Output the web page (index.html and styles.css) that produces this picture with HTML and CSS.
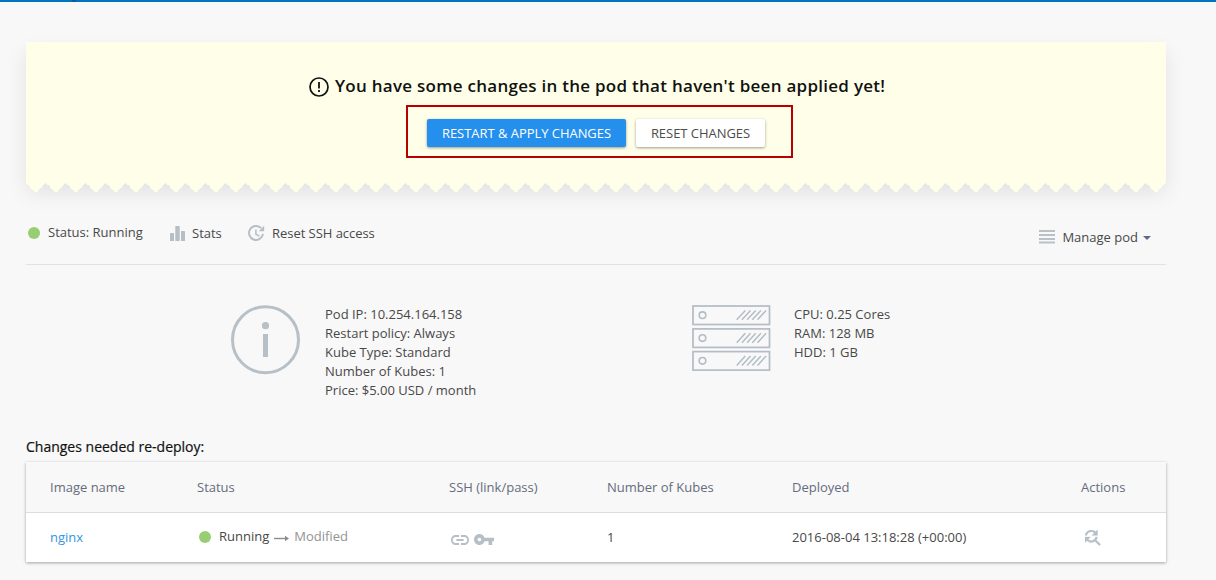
FILE: index.html
```
<!DOCTYPE html>
<html lang="en">
<head>
<meta charset="utf-8">
<title>Pod</title>
<link rel="stylesheet" href="styles.css">
</head>
<body>
<div class="topbar"><span class="topbar-notch"></span></div>
<main class="page">
  <section class="notice">
    <h1 class="notice-title">
      <svg width="20" height="20" viewBox="0 0 20 20"><circle cx="10" cy="10" r="9" fill="none" stroke="#111" stroke-width="1.7"/><path d="M10 5v6.4M10 13v2" stroke="#111" stroke-width="1.8"/></svg>
      <span class="notice-text">You have some changes in the pod that haven't been applied yet!</span>
    </h1>
    <div class="notice-actions">
      <button class="btn btn-primary">RESTART &amp; APPLY CHANGES</button>
      <button class="btn btn-plain">RESET CHANGES</button>
    </div>
  </section>

  <nav class="toolbar">
    <span class="status"><i class="dot"></i><span>Status: Running</span></span>
    <span class="tool stats">
      <svg width="15" height="15" viewBox="0 0 15 15" fill="#b6bec6"><rect x="0" y="7" width="4" height="8" rx=".6"/><rect x="5.3" y="0" width="4.4" height="15" rx=".6"/><rect x="11" y="5" width="4" height="10" rx=".6"/></svg>
      <span>Stats</span>
    </span>
    <span class="tool ssh">
      <svg width="17" height="17" viewBox="0 0 17 17" fill="none" stroke="#b6bec6"><path d="M13.200 3.200A7 7 0 1 0 15 8.800" stroke-width="1.900"/><path d="M16.200.8v5.400h-5.400z" fill="#b6bec6" stroke="none"/><path d="M7.900 4.400v4.800l3.600 2" stroke-width="1.500"/></svg>
      <span>Reset SSH access</span>
    </span>
    <span class="manage">
      <svg width="16" height="14" viewBox="0 0 16 14" fill="#b9c0c8"><path d="M0 0h16v2H0zM0 4h16v2H0zM0 8h16v2H0zM0 11.500h16v2H0z"/></svg>
      <span>Manage pod</span>
      <i class="caret"></i>
    </span>
  </nav>

  <section class="info">
    <svg class="info-icon" width="70" height="70" viewBox="0 0 70 70"><circle cx="35.500" cy="34.700" r="33" fill="none" stroke="#b7c0c7" stroke-width="3"/><circle cx="35.500" cy="20.700" r="3.600" fill="#b7c0c7"/><path d="M33 29h5v23h-5z" fill="#b7c0c7"/></svg>
    <ul class="facts pod-facts">
      <li>Pod IP: 10.254.164.158</li>
      <li>Restart policy: Always</li>
      <li>Kube Type: Standard</li>
      <li>Number of Kubes: 1</li>
      <li>Price: $5.00 USD / month</li>
    </ul>
    <svg class="server-icon" width="80" height="67" viewBox="0 0 80 67" fill="none" stroke="#b3bdc5">
      <defs><g id="unit"><rect x="1" y="1" width="76.500" height="18.500" stroke-width="1.700"/><circle cx="10.500" cy="10.200" r="3.300" stroke-width="1.600"/><path d="M44.700 14.800l8.600-9.400M49.900 14.800l8.600-9.400M55.100 14.800l8.600-9.400M60.300 14.800l8.600-9.400M65.500 14.800l8.600-9.400" stroke-width="1.500"/></g></defs>
      <use href="#unit"/><use href="#unit" y="22.900"/><use href="#unit" y="45.600"/>
    </svg>
    <ul class="facts">
      <li>CPU: 0.25 Cores</li>
      <li>RAM: 128 MB</li>
      <li>HDD: 1 GB</li>
    </ul>
  </section>

  <h2 class="table-title">Changes needed re-deploy:</h2>
  <div class="table">
    <div class="row head">
      <span>Image name</span><span>Status</span><span>SSH (link/pass)</span><span>Number of Kubes</span><span>Deployed</span><span>Actions</span>
    </div>
    <div class="row">
      <a class="link">nginx</a>
      <span class="state"><i class="dot"></i><span>Running</span>
        <svg width="15" height="7" viewBox="0 0 15 7"><path d="M0 3.500h12" stroke="#8c8c8c" stroke-width="1.400"/><path d="M11 .8l4 2.700-4 2.700z" fill="#8c8c8c"/></svg>
        <span class="muted">Modified</span></span>
      <span class="keys">
        <svg width="18" height="10" viewBox="2 7 20 10" preserveAspectRatio="none" fill="#b6bec6"><path d="M3.900 12c0-1.710 1.390-3.100 3.100-3.100h4V7H7c-2.760 0-5 2.240-5 5s2.240 5 5 5h4v-1.900H7c-1.710 0-3.100-1.390-3.100-3.100zM8 13h8v-2H8v2zm9-6h-4v1.900h4c1.710 0 3.100 1.390 3.100 3.100s-1.390 3.100-3.100 3.100h-4V17h4c2.760 0 5-2.240 5-5s-2.240-5-5-5z"/></svg>
        <svg width="20" height="11" viewBox="1 6 22 12" preserveAspectRatio="none" fill="#b6bec6"><path d="M12.650 10C11.830 7.670 9.610 6 7 6c-3.310 0-6 2.690-6 6s2.690 6 6 6c2.610 0 4.830-1.670 5.650-4H17v4h4v-4h2v-4H12.650zM7 14c-1.100 0-2-.9-2-2s.9-2 2-2 2 .9 2 2-.9 2-2 2z"/></svg>
      </span>
      <span>1</span>
      <span>2016-08-04 13:18:28 (+00:00)</span>
      <span class="action"><svg width="16" height="16" viewBox="4 4 18 18" fill="#b6bec6" stroke="#b6bec6" stroke-width=".5"><path d="M11 6c1.380 0 2.630.56 3.540 1.460L12 10h6V4l-2.050 2.050C14.680 4.780 12.930 4 11 4c-3.530 0-6.430 2.610-6.920 6H6.100c.46-2.280 2.480-4 4.900-4zm5.640 9.140c.66-.9 1.120-1.970 1.280-3.140H15.900c-.46 2.280-2.480 4-4.900 4-1.380 0-2.630-.56-3.540-1.460L10 12H4v6l2.050-2.050C7.320 17.220 9.070 18 11 18c1.550 0 2.980-.51 4.140-1.360L20 21.490 21.490 20l-4.850-4.860z"/></svg></span>
    </div>
  </div>
</main>
</body>
</html>
```
FILE: styles.css
```
* { box-sizing: border-box; }
body {
  margin: 0;
  height: 580px;
  overflow: hidden;
  background: #f8f8f8;
  color: #484848;
  font: 400 13px/19px "Open Sans", sans-serif;
}
svg { display: block; flex: none; }
ul { margin: 0; padding: 0; list-style: none; }
.topbar { height: 2px; background: #0075bf; }
.topbar-notch { display: block; width: 4px; height: 2px; margin-left: 72px; background: #155b8c; }
.page { width: 1140px; margin: 40px 0 0 26px; }

.notice {
  position: relative;
  height: 141px;
  padding-top: 33px;
  background: #ffffe9;
  box-shadow: 0 10px 20px rgba(0, 0, 0, .09);
}
.notice::after {
  content: "";
  position: absolute;
  left: 0;
  top: 100%;
  width: 100%;
  height: 10px;
  background: conic-gradient(from -45deg at 50% 100%, #ffffe9 90deg, transparent 0) 0 0 / 20px 10px repeat-x;
}
.notice-title {
  display: flex;
  gap: 6px;
  margin: 0;
  padding-left: 283px;
  height: 30px;
  font-size: 17px;
  line-height: 22px;
  font-weight: 600;
  letter-spacing: .27px;
  color: #111;
}
.notice-title svg { margin-top: 2px; }
.notice-text { white-space: nowrap; }
.notice-actions {
  display: flex;
  gap: 10px;
  width: 387px;
  height: 53px;
  margin-left: 380px;
  padding: 12px 0 0 19px;
  border: 2px solid #b80000;
}
.btn {
  height: 28px;
  padding: 0;
  border: 0;
  border-radius: 2px;
  font: 400 13px/28px "Open Sans", sans-serif;
  letter-spacing: -.04px;
  box-shadow: 0 1px 3px rgba(0, 0, 0, .4);
}
.btn-primary { width: 199px; background: #248fec; color: #fff; }
.btn-plain { width: 129px; background: #fff; color: #4c4c4c; }

.toolbar {
  display: flex;
  height: 82px;
  padding: 40px 0 0 2px;
  border-bottom: 1px solid #e2e2e2;
}
.dot { width: 12px; height: 12px; border-radius: 50%; background: #97ce74; flex: none; }
.status { display: flex; gap: 8px; width: 142px; }
.status .dot { margin-top: 4px; }
.tool { display: flex; padding-top: 1px; }
.stats { width: 78px; gap: 7px; }
.stats svg { margin-top: 2px; }
.ssh { gap: 7px; letter-spacing: -.04px; }
.ssh svg { margin-top: 1px; }
.manage { display: flex; gap: 7px; margin-left: auto; padding: 5px 15px 0 0; }
.manage svg { margin-top: 2px; }
.caret { margin: 8px 0 0 -2px; width: 8px; height: 4px; background: #5f6b85; clip-path: polygon(0 0, 100% 0, 50% 100%); }

.info { display: flex; height: 171px; padding: 40px 0 0 204px; }
.info-icon { margin-right: 25px; }
.pod-facts { width: 367px; }
.server-icon { margin-right: 22px; }

.table-title { margin: 0; height: 26px; font-size: 14px; line-height: 21px; font-weight: 400; color: #111; -webkit-text-stroke: .2px #111; }
.table { height: 100px; background: #fff; box-shadow: 0 1px 3px rgba(0, 0, 0, .35); }
.row { display: grid; grid-template-columns: 147px 252px 158px 185px 289px 1fr; padding-left: 24px; height: 49px; line-height: 48px; }
.head { height: 51px; line-height: 50px; background: #f8f8f8; border-bottom: 1px solid #ddd; color: #656c7c; }
.link { color: #3295e6; }
.state { display: flex; height: 48px; line-height: 46px; padding-left: 2px; }
.state .dot { margin: 18px 8px 0 0; }
.state svg { margin: 22px 5px 0; }
.muted { color: #949494; }
.keys { display: flex; gap: 5px; padding: 21px 0 0 2px; }
.keys svg:first-child { margin-top: 1px; }
.action { padding: 17px 0 0 4px; }
```
